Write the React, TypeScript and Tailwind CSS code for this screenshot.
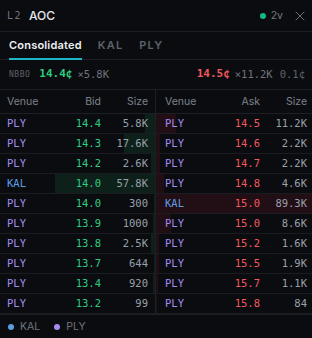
import { X } from 'lucide-react';

type Level = { venue: 'PLY' | 'KAL'; price: string; size: string; qty: number };

const bids: Level[] = [
  { venue: 'PLY', price: '14.4', size: '5.8K', qty: 5800 },
  { venue: 'PLY', price: '14.3', size: '17.6K', qty: 17600 },
  { venue: 'PLY', price: '14.2', size: '2.6K', qty: 2600 },
  { venue: 'KAL', price: '14.0', size: '57.8K', qty: 57800 },
  { venue: 'PLY', price: '14.0', size: '300', qty: 300 },
  { venue: 'PLY', price: '13.9', size: '1000', qty: 1000 },
  { venue: 'PLY', price: '13.8', size: '2.5K', qty: 2500 },
  { venue: 'PLY', price: '13.7', size: '644', qty: 644 },
  { venue: 'PLY', price: '13.4', size: '920', qty: 920 },
  { venue: 'PLY', price: '13.2', size: '99', qty: 99 },
];

const asks: Level[] = [
  { venue: 'PLY', price: '14.5', size: '11.2K', qty: 11200 },
  { venue: 'PLY', price: '14.6', size: '2.2K', qty: 2200 },
  { venue: 'PLY', price: '14.7', size: '2.2K', qty: 2200 },
  { venue: 'PLY', price: '14.8', size: '4.6K', qty: 4600 },
  { venue: 'KAL', price: '15.0', size: '89.3K', qty: 89300 },
  { venue: 'PLY', price: '15.0', size: '8.6K', qty: 8600 },
  { venue: 'PLY', price: '15.2', size: '1.6K', qty: 1600 },
  { venue: 'PLY', price: '15.5', size: '1.9K', qty: 1900 },
  { venue: 'PLY', price: '15.7', size: '1.1K', qty: 1100 },
  { venue: 'PLY', price: '15.8', size: '84', qty: 84 },
];

const maxQty = 89300;
const mono = "font-['DejaVu_Sans_Mono',monospace]";

function venueColor(v: string) {
  return v === 'KAL' ? 'text-[#5c9fe0]' : 'text-[#a48cf0]';
}

function BidRow({ l }: { l: Level }) {
  return (
    <div className="relative h-5 border-b border-[#1a1c22] grid grid-cols-[1fr_40px_47px] items-center pl-[7px] pr-[7px]">
      <div
        className="absolute right-0 top-0 bottom-0 bg-[#0f2a1f]/70"
        style={{ width: `${(l.qty / maxQty) * 100}%` }}
      />
      <span className={`relative ${venueColor(l.venue)}`}>{l.venue}</span>
      <span className="relative text-right text-[#2fcc80]">{l.price}</span>
      <span className="relative text-right text-[#9aa0aa]">{l.size}</span>
    </div>
  );
}

function AskRow({ l }: { l: Level }) {
  return (
    <div className="relative h-5 border-b border-[#1a1c22] grid grid-cols-[1fr_40px_47px] items-center pl-[9px] pr-[5px]">
      <div
        className="absolute left-0 top-0 bottom-0 bg-[#2c1018]/70"
        style={{ width: `${(l.qty / maxQty) * 100}%` }}
      />
      <span className={`relative ${venueColor(l.venue)}`}>{l.venue}</span>
      <span className="relative text-right text-[#f0595f]">{l.price}</span>
      <span className="relative text-right text-[#9aa0aa]">{l.size}</span>
    </div>
  );
}

export default function App() {
  return (
    <div className="w-[312px] h-[338px] bg-[#0b0c10] text-[#8a8f99] font-['Inter',sans-serif] overflow-hidden flex flex-col">
      {/* Header */}
      <div className="h-8 shrink-0 flex items-center px-[7px] border-b border-[#1d1f25]">
        <span className={`${mono} text-[10px] tracking-[1.5px] text-[#6f747d]`}>L2</span>
        <span className="ml-[7px] text-[12px] font-medium text-[#e6e8ec]">AOC</span>
        <div className="ml-auto flex items-center">
          <span className="w-[6px] h-[6px] rounded-full bg-[#10b981]" />
          <span className="ml-[5px] text-[10.5px] text-[#737882]">2v</span>
          <X className="ml-[9px] mr-[-3px] w-4 h-4 text-[#737882]" strokeWidth={1.4} />
        </div>
      </div>

      {/* Tabs */}
      <div className="h-7 shrink-0 flex items-stretch px-[9px] gap-[16px] border-b border-[#1d1f25]">
        <div className="relative flex items-center text-[11px] font-semibold text-[#eef0f3] tracking-[0.2px]">
          Consolidated
          <span className="absolute left-0 right-0 -bottom-px h-[2px] bg-[#1fb5c9]" />
        </div>
        <div className="flex items-center text-[11px] font-semibold tracking-[1.2px] text-[#5d626b]">KAL</div>
        <div className="flex items-center text-[11px] font-semibold tracking-[1.2px] text-[#5d626b]">PLY</div>
      </div>

      {/* NBBO */}
      <div className={`h-[30px] shrink-0 flex items-center px-[9px] border-b border-[#1d1f25] ${mono}`}>
        <span className="text-[8px] tracking-[0.5px] text-[#5d626b]">NBBO</span>
        <span className="ml-[9px] text-[11px] font-bold text-[#2fcc80]">14.4¢</span>
        <span className="ml-[5px] text-[10.5px] text-[#6f747d]">×5.8K</span>
        <span className="ml-auto text-[11px] font-bold text-[#f0595f]">14.5¢</span>
        <span className="ml-[5px] text-[10.5px] text-[#6f747d]">×11.2K</span>
        <span className="ml-[7px] mr-[-2px] text-[10.5px] text-[#5d626b]">0.1¢</span>
      </div>

      {/* Book */}
      <div className="flex shrink-0 border-b border-[#1d1f25]">
        <div className="w-[156px] border-r border-[#1d1f25]">
          <div className="h-6 grid grid-cols-[1fr_40px_47px] items-center pl-[7px] pr-[7px] border-b border-[#1d1f25] text-[10.5px] text-[#7d828c]">
            <span>Venue</span>
            <span className="text-right">Bid</span>
            <span className="text-right">Size</span>
          </div>
          <div className={`${mono} text-[10.5px]`}>
            {bids.map((l, i) => (
              <BidRow key={i} l={l} />
            ))}
          </div>
        </div>
        <div className="flex-1">
          <div className="h-6 grid grid-cols-[1fr_40px_47px] items-center pl-[9px] pr-[5px] border-b border-[#1d1f25] text-[10.5px] text-[#7d828c]">
            <span>Venue</span>
            <span className="text-right">Ask</span>
            <span className="text-right">Size</span>
          </div>
          <div className={`${mono} text-[10.5px]`}>
            {asks.map((l, i) => (
              <AskRow key={i} l={l} />
            ))}
          </div>
        </div>
      </div>

      {/* Legend */}
      <div className="flex-1 flex items-center px-[8px] text-[10.5px] text-[#6f747d]">
        <span className="w-[6px] h-[6px] rounded-full bg-[#5c9fe0]" />
        <span className="ml-[6px]">KAL</span>
        <span className="ml-[14px] w-[6px] h-[6px] rounded-full bg-[#a48cf0]" />
        <span className="ml-[6px]">PLY</span>
      </div>
    </div>
  );
}
